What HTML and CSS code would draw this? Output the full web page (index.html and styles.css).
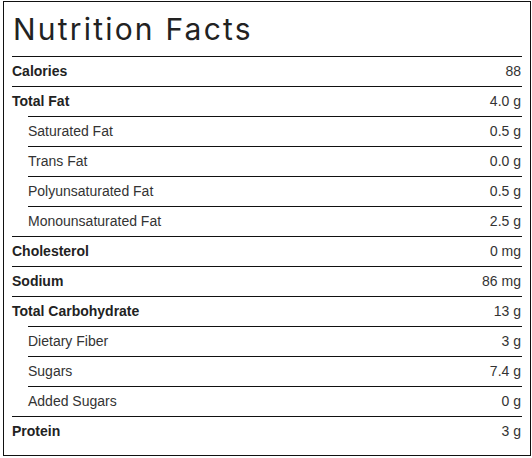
FILE: index.html
```html
<!DOCTYPE html>
<html>
<head>
<meta charset="utf-8">
<link rel="stylesheet" href="styles.css">
</head>
<body>
<div class="panel">
  <h1 class="title">Nutrition Facts</h1>
  <div class="row main"><span class="label">Calories</span><span class="value">88</span></div>
  <div class="row main"><span class="label">Total Fat</span><span class="value">4.0 g</span></div>
  <div class="row sub"><span class="label">Saturated Fat</span><span class="value">0.5 g</span></div>
  <div class="row sub"><span class="label">Trans Fat</span><span class="value">0.0 g</span></div>
  <div class="row sub"><span class="label">Polyunsaturated Fat</span><span class="value">0.5 g</span></div>
  <div class="row sub"><span class="label">Monounsaturated Fat</span><span class="value">2.5 g</span></div>
  <div class="row main"><span class="label">Cholesterol</span><span class="value">0 mg</span></div>
  <div class="row main"><span class="label">Sodium</span><span class="value">86 mg</span></div>
  <div class="row main"><span class="label">Total Carbohydrate</span><span class="value">13 g</span></div>
  <div class="row sub"><span class="label">Dietary Fiber</span><span class="value">3 g</span></div>
  <div class="row sub"><span class="label">Sugars</span><span class="value">7.4 g</span></div>
  <div class="row sub"><span class="label">Added Sugars</span><span class="value">0 g</span></div>
  <div class="row main"><span class="label">Protein</span><span class="value">3 g</span></div>
</div>
</body>
</html>
```
FILE: styles.css
```css
html, body {
  margin: 0;
  padding: 0;
  background: #fff;
}
.panel {
  box-sizing: border-box;
  margin: 1px 0 0 3px;
  width: 528px;
  height: 455px;
  border: 1px solid #111;
  padding: 0 8px 8px 8px;
  font-family: "Liberation Sans", Arial, sans-serif;
  color: #333;
}
.title {
  margin: 0;
  padding-left: 1px;
  height: 54px;
  line-height: 54px;
  font-family: Inter, "Noto Sans", sans-serif;
  font-weight: 400;
  font-size: 30px;
  letter-spacing: 2.2px;
  color: #222;
}
.row {
  box-sizing: border-box;
  height: 30px;
  border-top: 1px solid #111;
  padding-bottom: 1px;
  display: flex;
  align-items: center;
  justify-content: space-between;
  font-size: 14px;
}
.main .label {
  font-weight: 700;
  color: #222;
}
.sub {
  margin-left: 16px;
}
.value {
  padding-right: 1px;
}
```
